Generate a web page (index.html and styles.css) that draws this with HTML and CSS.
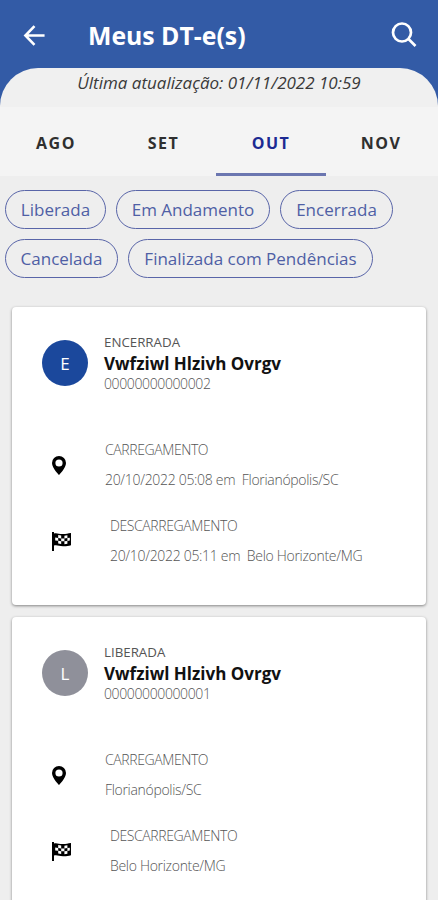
FILE: index.html
```html
<!DOCTYPE html>
<html lang="pt-BR">
<head>
    <meta charset="UTF-8">
    <meta name="viewport" content="width=device-width, initial-scale=1.0">
    <title>Meus DT-e(s)</title>
    <link rel="stylesheet" href="styles.css">
</head>
<body>
    <header class="topbar">
        <svg class="icon-back" viewBox="0 0 24 24" fill="none" stroke="#fff" stroke-width="2.7">
            <path d="M22.5 12H3M12 2.2L2.5 12l9.500 9.800"/>
        </svg>
        <h1>Meus DT-e(s)</h1>
        <svg class="icon-search" viewBox="0 0 26 26" fill="none" stroke="#fff" stroke-width="2.7">
            <circle cx="11" cy="10.500" r="9"/>
            <path d="M17.500 17l7 7"/>
        </svg>
    </header>

    <div class="sheet-wrap">
        <div class="sheet">
            <span class="updated">Última atualização: 01/11/2022 10:59</span>
        </div>
    </div>

    <nav class="tabs">
        <button class="tab">AGO</button>
        <button class="tab">SET</button>
        <button class="tab active">OUT</button>
        <button class="tab">NOV</button>
    </nav>

    <!-- Filtros -->
    <div class="filters">
        <div class="filter-row">
            <button class="chip chip-liberada">Liberada</button>
            <button class="chip chip-andamento">Em Andamento</button>
            <button class="chip chip-encerrada">Encerrada</button>
        </div>
        <div class="filter-row">
            <button class="chip chip-cancelada">Cancelada</button>
            <button class="chip chip-finalizada">Finalizada com Pendências</button>
        </div>
    </div>

    <!-- Lista -->
    <main class="list">
        <article class="card">
            <div class="card-head">
                <div class="avatar">E</div>
                <div class="info">
                    <span class="status">ENCERRADA</span>
                    <strong class="name">Vwfziwl Hlzivh Ovrgv</strong>
                    <span class="number">00000000000002</span>
                </div>
            </div>
            <div class="step">
                <svg class="icon-pin" viewBox="0 0 14 19">
                    <path fill-rule="evenodd" d="M7 0a7 7 0 0 0-7 7c0 5 7 12 7 12s7-7 7-12a7 7 0 0 0-7-7zm0 3.400a3.600 3.600 0 1 1 0 7.200 3.600 3.600 0 0 1 0-7.200z"/>
                </svg>
                <div class="step-text">
                    <span class="label">CARREGAMENTO</span>
                    <span class="place">20/10/2022 05:08 em&nbsp; Florianópolis/SC</span>
                </div>
            </div>
            <div class="step unload">
                <svg class="icon-flag" viewBox="0 0 20 19">
                    <path d="M0 0h2v1.500c3-1 5 .8 9 .6 3 0 5-.8 8-1.200v12.300c-3 .6-5 1.200-8 1-4-.2-6-1.500-9-.7V19H0z"/>
                    <path fill="#fff" d="M6.200 3l3 .6v2.800l-3-.5zM12.400 3.700l3-.4v2.800l-3 .4zM3.200 5.500l3 .4v2.900l-3-.2zM9.200 6.400h3.200v2.900H9.200zM15.400 6.100l2.400-.4v2.900l-2.400.3zM6.200 8.800l3 .5v2.800l-3-.6zM12.400 9.300l3-.4v2.800l-3 .5z"/>
                </svg>
                <div class="step-text">
                    <span class="label">DESCARREGAMENTO</span>
                    <span class="place">20/10/2022 05:11 em&nbsp; Belo Horizonte/MG</span>
                </div>
            </div>
        </article>

        <article class="card">
            <div class="card-head">
                <div class="avatar gray">L</div>
                <div class="info">
                    <span class="status">LIBERADA</span>
                    <strong class="name">Vwfziwl Hlzivh Ovrgv</strong>
                    <span class="number">00000000000001</span>
                </div>
            </div>
            <div class="step">
                <svg class="icon-pin" viewBox="0 0 14 19">
                    <path fill-rule="evenodd" d="M7 0a7 7 0 0 0-7 7c0 5 7 12 7 12s7-7 7-12a7 7 0 0 0-7-7zm0 3.400a3.600 3.600 0 1 1 0 7.200 3.600 3.600 0 0 1 0-7.200z"/>
                </svg>
                <div class="step-text">
                    <span class="label">CARREGAMENTO</span>
                    <span class="place">Florianópolis/SC</span>
                </div>
            </div>
            <div class="step unload">
                <svg class="icon-flag" viewBox="0 0 20 19">
                    <path d="M0 0h2v1.500c3-1 5 .8 9 .6 3 0 5-.8 8-1.200v12.300c-3 .6-5 1.200-8 1-4-.2-6-1.500-9-.7V19H0z"/>
                    <path fill="#fff" d="M6.200 3l3 .6v2.800l-3-.5zM12.400 3.700l3-.4v2.800l-3 .4zM3.200 5.500l3 .4v2.900l-3-.2zM9.200 6.400h3.200v2.900H9.200zM15.400 6.100l2.400-.4v2.900l-2.400.3zM6.200 8.800l3 .5v2.800l-3-.6zM12.400 9.300l3-.4v2.800l-3 .5z"/>
                </svg>
                <div class="step-text">
                    <span class="label">DESCARREGAMENTO</span>
                    <span class="place">Belo Horizonte/MG</span>
                </div>
            </div>
        </article>
    </main>
</body>
</html>
```

FILE: styles.css
```css
:root {
    --blue: #335ba6;
    --outline: #5965a8;
}

* {
    box-sizing: border-box;
}

body {
    margin: 0;
    height: 900px;
    overflow: hidden;
    background: #eeeeee;
    font-family: "Open Sans", "Noto Sans", sans-serif;
    color: #222;
}

button {
    font-family: inherit;
    background: none;
    border: none;
    padding: 0;
    white-space: nowrap;
}

.topbar {
    display: flex;
    align-items: center;
    height: 68px;
    padding: 2px 21px 0 23px;
    background: var(--blue);
}

.icon-back {
    width: 23px;
    height: 23px;
}

.topbar h1 {
    flex: 1;
    margin: 0 0 0 42px;
    font-size: 24.8px;
    line-height: 32px;
    font-weight: 700;
    color: #fff;
}

.icon-search {
    width: 26px;
    height: 26px;
}

.sheet-wrap {
    background: var(--blue);
}

.sheet {
    height: 39px;
    border-radius: 38px 38px 0 0;
    background: #f0f0f0;
    text-align: center;
}

.updated {
    font-size: 17px;
    line-height: 30px;
    font-style: italic;
    color: #3a3a3a;
}

.tabs {
    display: grid;
    grid-template-columns: 110px 105px 110px 110px;
    height: 69px;
    padding-left: 1px;
    background: #f4f4f4;
}

.tab {
    padding: 5px 0 0;
    border-bottom: 3px solid transparent;
    font-size: 16px;
    font-weight: 700;
    letter-spacing: 1.5px;
    color: #2f2f2f;
}

.tab.active {
    border-bottom-color: #6b76b0;
    color: #1c2a92;
}

.filters {
    display: flex;
    flex-direction: column;
    gap: 10px;
    padding: 14px 5px 0;
}

.filter-row {
    display: flex;
    gap: 10px;
}

.chip {
    height: 39px;
    border: 1px solid var(--outline);
    border-radius: 20px;
    font-size: 17px;
    color: #4f5fa5;
}

.chip-liberada {
    width: 101px;
}

.chip-andamento {
    width: 154px;
}

.chip-encerrada {
    width: 113px;
}

.chip-cancelada {
    width: 113px;
}

.chip-finalizada {
    width: 245px;
}

.list {
    display: flex;
    flex-direction: column;
    gap: 12px;
    padding: 29px 12px 0;
}

.card {
    height: 298px;
    flex-shrink: 0;
    padding: 25px 30px 0;
    border-radius: 4px;
    background: #fff;
    box-shadow: 0 1px 3px rgba(0, 0, 0, 0.45);
}

.card-head {
    display: flex;
    align-items: center;
    height: 62px;
}

.avatar {
    width: 46px;
    height: 46px;
    border-radius: 50%;
    background: #1b489c;
    color: #fff;
    font-size: 17px;
    line-height: 47px;
    text-align: center;
}

.avatar.gray {
    background: #8f909a;
}

.info {
    display: flex;
    flex-direction: column;
    margin-left: 16px;
}

.info span,
.info strong {
    line-height: 21px;
    white-space: nowrap;
}

.status {
    font-size: 13.3px;
    color: #555;
}

.name {
    font-size: 17px;
    color: #111;
}

.info .number {
    font-size: 14px;
    font-weight: 300;
    line-height: 20px;
    letter-spacing: -0.38px;
    color: #555;
}

.step {
    display: flex;
    align-items: center;
    height: 60px;
    margin-top: 41px;
    padding-left: 10px;
}

.step.unload {
    margin-top: 16px;
}

.icon-pin {
    width: 14px;
    height: 19px;
    margin-right: 39px;
}

.icon-flag {
    width: 20px;
    height: 19px;
    margin-right: 38px;
}

.step-text {
    display: flex;
    flex-direction: column;
}

.step-text span {
    font-size: 14px;
    font-weight: 300;
    line-height: 30px;
    color: #555;
    white-space: nowrap;
}

.step-text .label {
    letter-spacing: -0.4px;
}

.step-text .place {
    letter-spacing: -0.31px;
}
```
